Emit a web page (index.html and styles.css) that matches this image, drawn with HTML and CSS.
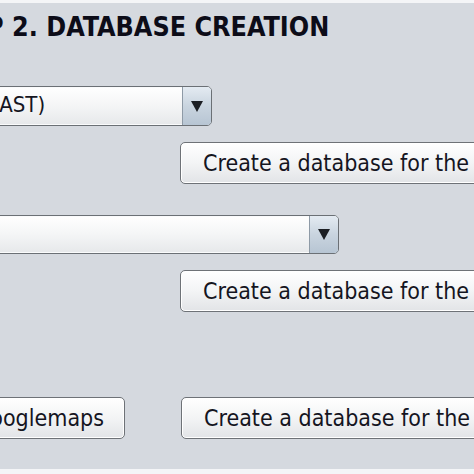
FILE: index.html
```html
<!DOCTYPE html>
<html>
<head>
<meta charset="utf-8">
<link rel="stylesheet" href="styles.css">
</head>
<body>
<div class="page">
  <h1 class="title">STEP 2. DATABASE CREATION</h1>
  <div class="row row-combo1">
    <div class="combo combo1"><span class="combo-text">(EAST)</span><span class="combo-arrow"><span class="tri"></span></span></div>
  </div>
  <div class="row row-btn1">
    <div class="btn btn-create">Create a database for the</div>
  </div>
  <div class="row row-combo2">
    <div class="combo combo2"><span class="combo-text"></span><span class="combo-arrow"><span class="tri"></span></span></div>
  </div>
  <div class="row row-btn2">
    <div class="btn btn-create">Create a database for the</div>
  </div>
  <div class="row row-btn3">
    <div class="btn btn-gm">Googlemaps</div>
    <div class="btn btn-create">Create a database for the</div>
  </div>
</div>
</body>
</html>
```
FILE: styles.css
```css
html, body {
  margin: 0;
  padding: 0;
}
body {
  width: 474px;
  height: 474px;
  overflow: hidden;
  background: #f4f5f7;
  font-family: Tahoma, "DejaVu Sans Condensed", "DejaVu Sans", sans-serif;
  color: #15151f;
}
.page {
  margin-top: 3px;
  height: 466px;
  background: #d5d9df;
  display: flex;
  flex-direction: column;
  overflow: hidden;
}
.title {
  margin: 0;
  margin-left: -64px;
  padding-top: 9px;
  font-size: 26.7px;
  font-weight: bold;
  line-height: 30px;
  white-space: nowrap;
  color: #0c0c18;
}
.row {
  display: flex;
  flex-shrink: 0;
  white-space: nowrap;
}
.combo {
  display: flex;
  box-sizing: border-box;
  border: 1px solid #6b7075;
  border-radius: 5px;
  background: linear-gradient(#ffffff, #f4f5f6 50%, #e6e8ea);
  box-shadow: inset 0 0 0 1px #fafbfc;
  overflow: hidden;
}
.combo-text {
  flex: 1;
  padding-left: 0;
  font-size: 22px;
  line-height: 36px;
  overflow: hidden;
}
.combo-arrow {
  width: 28px;
  border-left: 1px solid #8e9aa6;
  background: linear-gradient(#e4ebf2, #c9d4df 50%, #b7c5d3);
  display: flex;
  align-items: center;
  justify-content: center;
}
.tri {
  width: 0;
  height: 0;
  border-left: 6px solid transparent;
  border-right: 6px solid transparent;
  border-top: 11px solid #1c1f24;
}
.row-combo1 { margin-top: 44px; }
.combo1 { margin-left: -22px; width: 234px; height: 40px; }
.row-btn1 { margin-top: 16px; }
.btn {
  height: 42px;
  box-sizing: border-box;
  border: 1px solid #6e7277;
  border-radius: 5px;
  background: linear-gradient(#ffffff, #f3f4f5 50%, #e2e4e7);
  box-shadow: inset 0 0 0 1px #ffffff;
  font-size: 23px;
  line-height: 40px;
  padding-left: 22px;
}
.btn-create {
  margin-left: 180px;
  width: 420px;
  flex-shrink: 0;
}
.row-combo2 { margin-top: 31px; }
.combo2 { margin-left: -10px; width: 349px; height: 39px; }
.row-btn2 { margin-top: 16px; }
.row-btn3 { margin-top: 85px; }
.btn-gm {
  margin-left: -80px;
  width: 205px;
  flex-shrink: 0;
  padding-left: 0;
  padding-right: 20px;
  text-align: right;
}
.row-btn3 .btn-create { margin-left: 56px; }
```
